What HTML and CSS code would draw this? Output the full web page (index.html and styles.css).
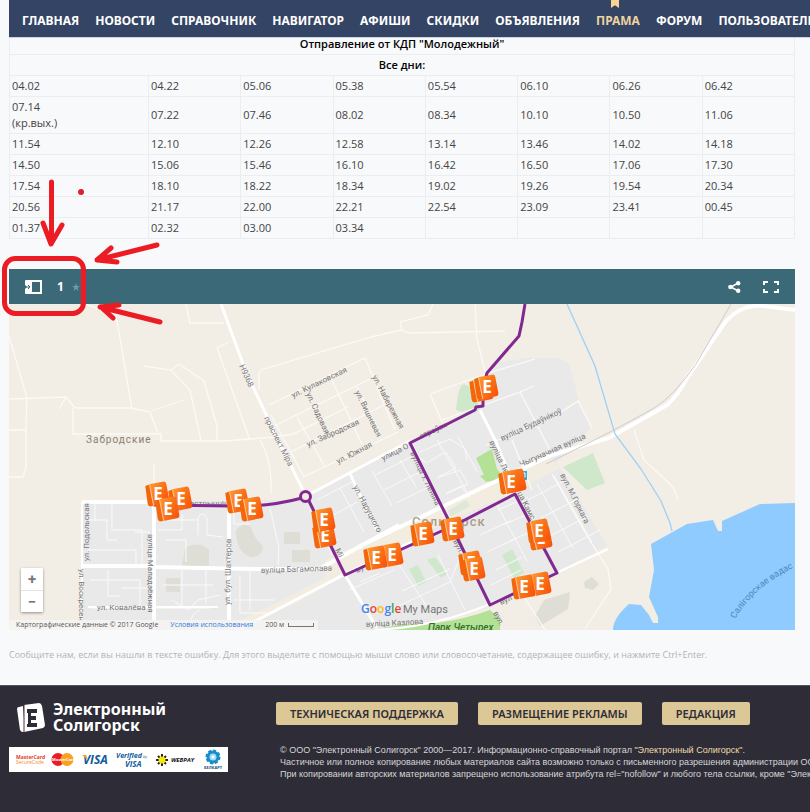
FILE: index.html
```html
<!DOCTYPE html>
<html lang="ru">
<head>
<meta charset="utf-8">
<title>Электронный Солигорск</title>
<link rel="stylesheet" href="styles.css">
</head>
<body>
<nav class="nav">
  <a href="#">ГЛАВНАЯ</a><a href="#">НОВОСТИ</a><a href="#">СПРАВОЧНИК</a><a href="#">НАВИГАТОР</a><a href="#">АФИШИ</a><a href="#">СКИДКИ</a><a href="#">ОБЪЯВЛЕНИЯ</a><a href="#" class="active">ПРАМА</a><a href="#">ФОРУМ</a><a href="#">ПОЛЬЗОВАТЕЛЮ</a>
</nav>
<main class="content">
  <table class="schedule">
    <colgroup><col class="first"><col><col><col><col><col><col><col></colgroup>
    <thead>
      <tr><th colspan="8">Отправление от КДП "Молодежный"</th></tr>
      <tr><th colspan="8">Все дни:</th></tr>
    </thead>
    <tbody>
      <tr><td>04.02</td><td>04.22</td><td>05.06</td><td>05.38</td><td>05.54</td><td>06.10</td><td>06.26</td><td>06.42</td></tr>
      <tr><td>07.14<br>(кр.вых.)</td><td>07.22</td><td>07.46</td><td>08.02</td><td>08.34</td><td>10.10</td><td>10.50</td><td>11.06</td></tr>
      <tr><td>11.54</td><td>12.10</td><td>12.26</td><td>12.58</td><td>13.14</td><td>13.46</td><td>14.02</td><td>14.18</td></tr>
      <tr><td>14.50</td><td>15.06</td><td>15.46</td><td>16.10</td><td>16.42</td><td>16.50</td><td>17.06</td><td>17.30</td></tr>
      <tr><td>17.54</td><td>18.10</td><td>18.22</td><td>18.34</td><td>19.02</td><td>19.26</td><td>19.54</td><td>20.34</td></tr>
      <tr><td>20.56</td><td>21.17</td><td>22.00</td><td>22.21</td><td>22.54</td><td>23.09</td><td>23.41</td><td>00.45</td></tr>
      <tr><td>01.37</td><td>02.32</td><td>03.00</td><td>03.34</td><td></td><td></td><td></td><td></td></tr>
    </tbody>
  </table>

  <section class="map">
    <header class="map-bar">
      <button class="icon-btn" aria-label="Легенда">
        <svg width="18" height="14" viewBox="0 0 18 14"><path d="M1 0h5v14H1a1 1 0 0 1-1-1V9l2-2-2-2V1a1 1 0 0 1 1-1z" fill="#fff"/><path d="M0 7h4M3 5l2 2-2 2" stroke="#3d6a7a" fill="none"/><path d="M6 1h10v12H6z" fill="none" stroke="#fff" stroke-width="2"/></svg>
      </button>
      <h2>1</h2>
      <button class="icon-btn star" aria-label="В избранное">
        <svg width="8" height="8" viewBox="0 0 8 8"><path d="M4 0l1 3h3L5.600 4.800 6.500 8 4 6 1.500 8l.9-3.200L0 3h3z" fill="#7597a3"/></svg>
      </button>
      <span class="spacer"></span>
      <button class="icon-btn share" aria-label="Поделиться">
        <svg width="13" height="12" viewBox="0 0 13 12"><path d="M10 2L3 6l7 4" fill="none" stroke="#fff" stroke-width="1.500"/><circle cx="10.200" cy="2.200" r="2.200" fill="#fff"/><circle cx="2.500" cy="6" r="2.300" fill="#fff"/><circle cx="10.200" cy="9.800" r="2.200" fill="#fff"/></svg>
      </button>
      <button class="icon-btn" aria-label="На весь экран">
        <svg width="16" height="12" viewBox="0 0 16 12"><path d="M1 4V1h4M11 1h4v3M15 8v3h-4M5 11H1V8" fill="none" stroke="#fff" stroke-width="2"/></svg>
      </button>
    </header>
    <div class="map-canvas">
      <svg class="map-svg" viewBox="9 304 786 326" role="img" aria-label="Карта маршрута">
        <defs>
          <linearGradient id="orange" x1="0" y1="0" x2="1" y2="1"><stop offset="0" stop-color="#ff9a2e"/><stop offset=".5" stop-color="#f9731b"/><stop offset="1" stop-color="#f84e08"/></linearGradient>
          <symbol id="stop" viewBox="-14 -14 28 28" overflow="visible">
            <g transform="rotate(-11)">
              <path d="M-10-10l5-1v22l-3 0q-3 0-3-3z" fill="#f4660c"/>
              <path d="M-6-11H8q3 0 3 3V8q0 3-3 3H-6z" fill="url(#orange)"/>
              <path d="M-5.500-11V11" stroke="#ffc795"/>
            </g>
            <text x="1" y="6" text-anchor="middle" class="stop-letter">E</text>
          </symbol>
        </defs>
        <rect x="9" y="304" width="786" height="326" fill="#f2ede5"/>
        <path fill="#e9e9e9" d="M82 502L300 500 340 478 410 442 483 405 490 372 498 362 530 358 558 358 569 364 575 385 579 402 591 428 556 463 563 472 607 546 560 570 490 606 440 622 365 630H82z"/>
        <path fill="#f2ece1" d="M325 560L440 507 490 480 545 454 560 468 510 494 430 530 345 576 300 601 240 630H222L325 578z"/>
        <g fill="#dfded6"><path d="M236 530q9-9 15-3 2 10 12 19-1 12-12 11-15-4-15-27zM185 548q14-8 24 2v16h-27zM166 578h14v14h-14zM284 532h16v12h-16zM292 550h18v12h-18zM544 600l26-8-2 17-28 17-5-10zM584 582l8-5 7 7-6 6-8-2z"/></g>
        <g fill="#cfe8cc"><path d="M456 410q2-25 8-26l10 5 6 20-10 6zM563 467l30-14 12 30-18 7zM502 555l10-6 12 24-10 5zM409 569l9-4 8 17-8 4zM427 560l8-3 12 17-6 4z"/></g>
        <path fill="#dde8d8" d="M448 511l18-11 4 6-20 11z"/>
        <path fill="#b3e297" d="M476 458l16-9 7 28-12 4zM480 476l17-7 8 10-19 3zM376 630q18-6 60-7 30-4 54-13l10 9v11z"/>
        <path fill="#8fcbff" d="M795 503L760 504 722 521v10h-4l-5-11-26 4-36 20 3 26-5 27 9 20v6h-5l-4-8-8-10-12-1Q613 618 613 630H795z"/>
        <g fill="none" stroke="#fcfaf6" stroke-width="1.300">
          <path d="M9 336l18 62-1 25v44l-3 10H9M9 399l57-2 9 11h56l19 4 8 22 3 0v7h64l50-4 18-3 55-27M66 397l-7 12M73 408v26h84M9 430h17M116 315l16 94M85 304l31 11M151 411l33-11M144 366l27 4 19 20 11 51M171 370l8-6 25 17 13 45v15M186 304l4 19h34M229 342l-12 6 33 92M259 390v-16l2-4 110-33 30-7M402 330l-2-8 28-7 5-11M400 330l10 3 95-2M475 304l2 35 8 32 4 20M269 405l96-47 30 72M274 426l98-48M291 452l95-48M303 477l95-45M271 415l33 62M297 417l28 50M329 374l33 70M357 387l24 48M430 394l55-20 50-15M430 394l12 28M154 464v40M260 440q12 20 11 53M634 430l10 30 29 27 5 12"/>
          <path d="M442 420l78-28 14-6M520 392l30 58M558 414l20-13 14 27M486 445l52-22M512 440l20 50M552 474l37 65 19 30 3 20-26 40M523 595l22 35"/>
        </g>
        <g fill="none" stroke="#fafafa" stroke-width="1">
          <path d="M87 520h20v20h10M95 503v18M112 503v27h30v34M88 550h48v14M135 532h14v28M158 530h24v-16M168 504v16h30M198 535v-17q4-8 9 0v17l16 2M166 540h20v22M234 510v14h16M90 580h50v26M108 570v26h12M121 588h26M163 585h50M172 600l16 10 10-10 22-5M90 608h120M182 570v38M206 568v35M240 575v38h28M234 600h40M250 570v40M190 630q0-18 10-20"/>
          <path d="M270 508l9 40-1 17M340 488l24 44M317 500l35-18M330 517l27-15M347 552l34-18M310 510l22 45M375 475l40-20 12 8M384 490l40-20M396 503l37-18M372 471l20 35M420 452l30-13 15 10 2 12M428 462l18-10 10 16-18 9M437 478l23-8 8 14-22 10M458 437l20 36M437 440l30 52M447 493l14-7 9 12M400 460l16 27"/>
          <path d="M390 610l60-28 12-30M402 591l48-22M360 582l20-9M349 590l45-20M386 545l44 66M438 555l27 55M498 510l30-13M503 525l25-11M510 541l35-16M495 501l32 60M518 490l32 60M537 484l36 64M554 476l38 66M528 500l38-20M541 518l38-20M550 536l38-20M558 552l42-22M480 535l30-14M487 552l30-14M496 570l26-13M491 585l30-15"/>
        </g>
        <g fill="none" stroke="#fff" stroke-width="4">
          <path d="M82 502h70M154 504v120M229 502v118M9 632l73-2" stroke-width="4"/>
          <path d="M82 566h73M154 567l100 2h65l40-22 40-22"/>
          <path d="M221 304l25 68 35 74 25 50L410 441M345 574L263 617l-25 13M345 575l32 53M345 574L430 533" stroke-width="3"/>
          <path d="M82 502v128M88 607h130M375 630q60-3 115-26l118-55" stroke-width="2"/>
          <path d="M360 546L490 484l62-29 57-17 58-33q13-12 20-27l39-57q16-17 37-15l32 4"/>
          <path d="M480 410l15 30 16 38M350 473l5 12 22 45M410 441l42 88" stroke-width="3"/>
        </g>
        <path d="M731 304l-35 60q-22 32-42 44-40 23-108 56" fill="none" stroke="#cfccc8"/>
        <path d="M567 304l28 62 20 68 26 35 20 32 9 22 2 8" fill="none" stroke="#9fd0f6" stroke-width="1.300"/>
        <g class="street">
          <text transform="translate(239 366) rotate(65)">Н9368</text>
          <text transform="translate(264 418) rotate(63)">праспект Міра</text>
          <text transform="translate(293 398) rotate(-26)">ул. Кулаковская</text>
          <text transform="translate(306 394) rotate(65)">ул. Садовая</text>
          <text transform="translate(355 392) rotate(64)">ул. Вишневая</text>
          <text transform="translate(372 377) rotate(62)">ул. Набережная</text>
          <text transform="translate(308 447) rotate(-24)">ул. Забродская</text>
          <text transform="translate(338 464) rotate(-27)">ул. Южная</text>
          <text transform="translate(383 461) rotate(-27)">улица О</text>
          <text transform="translate(421 439) rotate(-25)">строўск</text>
          <text transform="translate(410 453) rotate(64)">вуліца У. Леніна</text>
          <text transform="translate(353 487) rotate(62)">ул. Наруцкого</text>
          <text transform="translate(489 442) rotate(64)">вуліца Ле</text>
          <text transform="translate(502 441) rotate(-25)">вуліца Будаўнікоў</text>
          <text transform="translate(521 467) rotate(-24)">Чыгуначная вуліца</text>
          <text transform="translate(560 475) rotate(63)">вул. М.Горкага</text>
          <text transform="translate(517 493) rotate(63)">ца Камс</text>
          <text transform="translate(89 561) rotate(-90)">ул. Подольская</text>
          <text transform="translate(79 569) rotate(90)">ул. Воскресен</text>
          <text transform="translate(148 534) rotate(90)">вуліца Маладзёжная</text>
          <text transform="translate(230 605) rotate(-89)">ул. бул. Шахтеров</text>
          <text x="190" y="506">астрычніц</text>
          <text x="97" y="610">ул. Ковалёва</text>
          <text transform="translate(261 573) rotate(-2)">вуліца Багамолава</text>
          <text transform="translate(357 573) rotate(-26)">ву</text>
          <text transform="translate(335 550) rotate(63)">Мі</text>
          <text transform="translate(453 541) rotate(63)">вул.</text>
          <text transform="translate(501 605) rotate(-25)">вул</text>
          <text transform="translate(366 627) rotate(-3)">вуліца Казлова</text>
          <text transform="translate(493 613) rotate(62)">вул.</text>
        </g>
        <text x="86" y="443" class="town">Забродские</text>
        <text x="412" y="526" class="city">Солигорск</text>
        <text x="428" y="631" class="park">Парк Четырех</text>
        <path id="lake-line" d="M735 619Q757 582 806 562" fill="none"/>
        <text class="lake"><textPath href="#lake-line">Салігорскае вадас</textPath></text>
        <path d="M520 471h7v9h-7z" fill="#36a9dc"/><path d="M522 473h3v4h-3z" fill="none" stroke="#fff"/>
        <g fill="none" stroke="#812990" stroke-width="3" stroke-linejoin="round">
          <path d="M525 304l-3 18-3 14-32 37-4 15v18l-7 1-1 3-65 33 42 84 38 78 67-32-42-79-58 30-112 51-37-76M302 498q-33 9-70 8l-78-1v-8"/>
          <circle cx="305.500" cy="496.500" r="5" fill="#f2ede5"/>
        </g>
        <g>
          <use href="#stop" x="143" y="480" width="28" height="28"/><use href="#stop" x="166" y="485" width="28" height="28"/><use href="#stop" x="153" y="495" width="28" height="28"/>
          <use href="#stop" x="223" y="487" width="28" height="28"/><use href="#stop" x="237" y="495" width="28" height="28"/>
          <use href="#stop" x="310" y="522" width="28" height="28"/><use href="#stop" x="309" y="506" width="28" height="28"/>
          <use href="#stop" x="377" y="541" width="28" height="28"/><use href="#stop" x="361" y="544" width="28" height="28"/>
          <use href="#stop" x="408" y="520" width="28" height="28"/><use href="#stop" x="438" y="515" width="28" height="28"/>
          <use href="#stop" x="456" y="549" width="28" height="28"/><use href="#stop" x="459" y="555" width="28" height="28"/>
          <use href="#stop" x="467" y="376" width="28" height="28"/><use href="#stop" x="472" y="373" width="28" height="28"/>
          <use href="#stop" x="500" y="467" width="28" height="28"/><use href="#stop" x="496" y="468" width="28" height="28"/>
          <use href="#stop" x="526" y="524" width="28" height="28"/><use href="#stop" x="524" y="517" width="28" height="28"/>
          <use href="#stop" x="525" y="570" width="28" height="28"/><use href="#stop" x="509" y="573" width="28" height="28"/>
        </g>
        <text x="361" y="613" class="google"><tspan fill="#4285f4">G</tspan><tspan fill="#ea4335">o</tspan><tspan fill="#fbbc05">o</tspan><tspan fill="#4285f4">g</tspan><tspan fill="#34a853">l</tspan><tspan fill="#ea4335">e</tspan></text>
        <text x="403" y="613" class="mymaps">My Maps</text>
      </svg>
      <div class="zoom"><button aria-label="Приблизить">+</button><button aria-label="Отдалить">−</button></div>
      <div class="credits"><span>Картографические данные © 2017 Google</span><a href="#">Условия использования</a><span>200 м</span><i class="scale"></i></div>
    </div>
  </section>
  <p class="note">Сообщите нам, если вы нашли в тексте ошибку. Для этого выделите с помощью мыши слово или словосочетание, содержащее ошибку, и нажмите Ctrl+Enter.</p>
</main>
<footer class="footer">
  <div class="brand">
    <a href="#" class="logo">
      <svg width="30" height="31" viewBox="0 0 30 31"><path d="M1 7q0-2 2-2l4-1 2 26-2 0q-2 0-3-2z" fill="#fff"/><path d="M8 3l15-2q2 0 3 3l3 19q0 2-2 3L8 30z" fill="#fff"/><path d="M8 3v27" stroke="#5b3040" stroke-width="1"/><path d="M11 7h10v4h-6v3h5v4h-5v3h6v4H11v-3h1V11h-1z" fill="#2e2d37"/></svg>
      <strong>Электронный<br>Солигорск</strong>
    </a>
    <svg class="payments" width="219" height="25" viewBox="0 0 219 25" role="img" aria-label="Способы оплаты">
      <rect width="219" height="25" fill="#fff"/>
      <text x="7" y="12" class="pay" font-size="5" fill="#e8372c">MasterCard</text><text x="7" y="17" class="pay thin" font-size="5" fill="#f08a24">SecureCode</text>
      <circle cx="49" cy="12.500" r="6.500" fill="#eb1c26"/><circle cx="58" cy="12.500" r="6.500" fill="#fa9f1e"/><text x="43" y="14" class="pay" font-size="4" fill="#fff">MasterCard</text>
      <text x="74" y="17" class="pay ital" font-size="12" fill="#0f5b9e">VISA</text><path d="M73 8h4l2 5z" fill="#f3a51d"/>
      <text x="107" y="11" class="pay ital" font-size="7" fill="#125f9f">Verified</text><text x="134" y="11" class="pay ital thin" font-size="4" fill="#125f9f">by</text><text x="116" y="20" class="pay ital" font-size="8" fill="#125f9f">VISA</text>
      <g stroke="#262617" stroke-width="2"><path d="M153 7v12M147 13h12M149 9l8 8M157 9l-8 8"/></g><circle cx="153" cy="13" r="3.500" fill="#f4e80b"/>
      <text x="162" y="15" class="pay ital" font-size="6" fill="#111">WEBPAY</text>
      <circle cx="204" cy="10" r="6.500" fill="#178dcc" stroke="#178dcc" stroke-width="2" stroke-dasharray="3 2"/><circle cx="204" cy="10" r="3.500" fill="#a3dcf3"/><circle cx="204" cy="10" r="1.500" fill="#fff"/>
      <text x="195" y="22" class="pay" font-size="4" fill="#164f7a">БЕЛКАРТ</text>
    </svg>
  </div>
  <div class="info">
    <div class="actions"><button>ТЕХНИЧЕСКАЯ ПОДДЕРЖКА</button><button>РАЗМЕЩЕНИЕ РЕКЛАМЫ</button><button>РЕДАКЦИЯ</button></div>
    <p>© ООО "Электронный Солигорск" 2000—2017. Информационно-справочный портал <a href="#">"Электронный Солигорск"</a>.<br>Частичное или полное копирование любых материалов сайта возможно только с письменного разрешения администрации ООО<br>При копировании авторских материалов запрещено использование атрибута rel="nofollow" и любого тела ссылки, кроме "Электронный</p>
  </div>
</footer>
<svg class="marks" width="180" height="340" viewBox="0 0 180 340" aria-hidden="true">
  <g fill="none" stroke="#ec1c24" stroke-width="5" stroke-linecap="round" stroke-linejoin="round">
    <path d="M51.500 182v60M43 223l8 21 11-19M157 245l-60 15 14-12M97 260l20 2M160 322l-60-15 19-2M101 307l12 11"/>
    <rect x="4.500" y="258.500" width="79" height="55" rx="11"/>
  </g>
  <circle cx="81" cy="192" r="3" fill="#e01f2c"/>
</svg>
</body>
</html>
```
FILE: styles.css
```css
* { box-sizing: border-box; }
body {
  margin: 0;
  min-height: 100vh;
  display: flex;
  flex-direction: column;
  position: relative;
  overflow-x: hidden;
  background: #f8f9fb;
  color: #444;
  font: 11px/16px "Open Sans", "Noto Sans", sans-serif;
}
a { text-decoration: none; color: inherit; }
button { font: inherit; border: 0; padding: 0; background: none; cursor: pointer; }

.nav {
  position: relative;
  z-index: 1;
  display: flex;
  gap: 16px;
  height: 37px;
  margin-left: 9px;
  padding: 4px 0 0 13px;
  overflow: hidden;
  background: #344464;
  box-shadow: 0 1px #c9d3e2;
  color: #fff;
  font: bold 12px/33px "Noto Sans", sans-serif;
  white-space: nowrap;
}
.nav a { flex: none; }
.nav .active { color: #ecd3a0; }
.nav .active::before {
  content: "";
  position: absolute;
  top: 0;
  width: 8px;
  height: 8px;
  margin-left: 15px;
  background: #f6d594;
  clip-path: polygon(0 0, 100% 0, 100% 100%, 50% 65%, 0 100%);
}

.content { padding: 0 15px 0 9px; }
.schedule {
  width: 100%;
  margin-top: -4px;
  border-collapse: collapse;
  table-layout: fixed;
}
.schedule .first { width: 139px; }
.schedule th, .schedule td {
  height: 21px;
  padding: 2px;
  border: 1px solid #ecedf0;
  text-align: left;
}
.schedule th { color: #000; font-weight: 600; text-align: center; }

.map { margin-top: 30px; }
.map-bar {
  display: flex;
  align-items: center;
  height: 35px;
  padding: 0 16px;
  background: #3b6978;
  color: #fff;
}
.map-bar h2 { margin: 0 8px 0 14px; font: bold 12px/16px "Open Sans", sans-serif; }
.icon-btn { display: flex; }
.share { margin-right: 22px; }
.spacer { flex: 1; }
.map-canvas { position: relative; overflow: hidden; }
.map-svg { display: block; width: 100%; height: auto; }
.stop-letter { font: bold 17px "Open Sans", sans-serif; fill: #fff; }
.street { font: 8px Roboto, sans-serif; fill: #777; }
.town { font: 10px Roboto, sans-serif; fill: #8a8072; letter-spacing: 1px; }
.city { font: 500 13px Roboto, sans-serif; fill: #a99f8a; letter-spacing: 1px; }
.park { font: italic 500 10px Roboto, sans-serif; fill: #35702a; }
.lake { font: 9px Roboto, sans-serif; fill: #4b88be; }
.google { font: 600 12px "Open Sans", sans-serif; }
.mymaps { font: 11px Roboto, sans-serif; fill: #777; }

.zoom {
  position: absolute;
  left: 12px;
  bottom: 18px;
  width: 22px;
  background: #fff;
  border-radius: 1px;
  box-shadow: 0 1px 3px rgba(0, 0, 0, .4);
}
.zoom button {
  display: block;
  width: 22px;
  height: 22px;
  color: #777;
  font: bold 15px/22px Roboto, sans-serif;
}
.zoom button + button { border-top: 1px solid #e4e4e4; }
.credits {
  position: absolute;
  left: 0;
  bottom: 0;
  display: flex;
  align-items: center;
  gap: 12px;
  height: 10px;
  padding: 0 4px 0 7px;
  background: rgba(247, 245, 242, .85);
  color: #555;
  font: 7px/10px "Open Sans", sans-serif;
}
.credits a { color: #2b7de0; }
.scale { width: 26px; height: 4px; margin-left: -8px; border: 1px solid #777; border-top: 0; }

.note { margin: 17px 0 22px; color: #b3b3b3; font-size: 9px; white-space: nowrap; }

.footer {
  flex: 1;
  display: flex;
  gap: 48px;
  min-height: 127px;
  padding: 16px 0 0 9px;
  overflow: hidden;
  border-top: 1px solid #55545c;
  background: #2e2d37;
}
.brand { flex: none; }
.logo { display: flex; align-items: center; gap: 7px; margin: -1px 0 14px 7px; color: #fff; }
.logo strong { font: bold 16px/16px "Noto Sans", sans-serif; }
.payments { display: block; }
.pay { font-family: "Open Sans", sans-serif; font-weight: bold; }
.ital { font-style: italic; }
.thin { font-weight: normal; }
.info { flex: 1; min-width: 0; }
.actions { display: flex; gap: 20px; }
.actions button {
  height: 23px;
  padding: 0 14px;
  border-radius: 2px;
  background: #dcc797;
  color: #2e2d37;
  font: 600 11px/23px "Noto Sans", sans-serif;
  white-space: nowrap;
}
.info p {
  margin: 19px 0 0 4px;
  color: #d6d6d6;
  font: 9px/12px "Liberation Sans", Arial, sans-serif;
  white-space: nowrap;
}
.info p a { color: #eedcae; }

.marks { position: absolute; left: 0; top: 0; z-index: 2; pointer-events: none; }
```
